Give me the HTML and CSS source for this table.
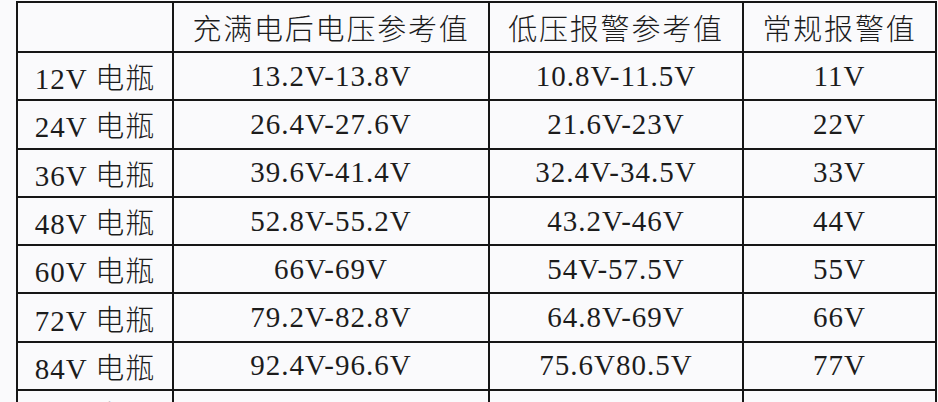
FILE: index.html
```html
<!DOCTYPE html>
<html lang="zh">
<head>
<meta charset="utf-8">
<link rel="stylesheet" href="styles.css">
</head>
<body>
<table class="volt">
  <colgroup>
    <col class="c1"><col class="c2"><col class="c3"><col class="c4">
  </colgroup>
  <thead>
    <tr class="head">
      <th></th>
      <th>充满电后电压参考值</th>
      <th>低压报警参考值</th>
      <th>常规报警值</th>
    </tr>
  </thead>
  <tbody>
    <tr><td>12V 电瓶</td><td>13.2V-13.8V</td><td>10.8V-11.5V</td><td>11V</td></tr>
    <tr><td>24V 电瓶</td><td>26.4V-27.6V</td><td>21.6V-23V</td><td>22V</td></tr>
    <tr><td>36V 电瓶</td><td>39.6V-41.4V</td><td>32.4V-34.5V</td><td>33V</td></tr>
    <tr><td>48V 电瓶</td><td>52.8V-55.2V</td><td>43.2V-46V</td><td>44V</td></tr>
    <tr><td>60V 电瓶</td><td>66V-69V</td><td>54V-57.5V</td><td>55V</td></tr>
    <tr><td>72V 电瓶</td><td>79.2V-82.8V</td><td>64.8V-69V</td><td>66V</td></tr>
    <tr><td>84V 电瓶</td><td>92.4V-96.6V</td><td>75.6V80.5V</td><td>77V</td></tr>
    <tr><td>96V 电瓶</td><td>105.6V-110.4V</td><td>86.4V-92V</td><td>88V</td></tr>
  </tbody>
</table>
</body>
</html>
```
FILE: styles.css
```css
html, body {
  margin: 0;
  padding: 0;
  background: #fafafc;
  overflow: hidden;
}
body {
  padding: 1px 0 0 16px;
  font-family: "Liberation Serif", "Noto Sans CJK SC", serif;
  color: #1c1c1c;
}
.volt {
  border-collapse: collapse;
  table-layout: fixed;
  width: 919px;
  font-size: 29px;
  letter-spacing: 1px;
}
.c1 { width: 156px; }
.c2 { width: 316px; }
.c3 { width: 254px; }
.c4 { width: 193px; }
.volt th, .volt td {
  border: 2px solid #161616;
  padding: 0;
  text-align: center;
  vertical-align: middle;
  font-weight: 300;
  white-space: nowrap;
}
.volt th {
  letter-spacing: 1.8px;
}
.head th {
  height: 48px;
}
.volt tbody td {
  height: 46.3px;
}
```
